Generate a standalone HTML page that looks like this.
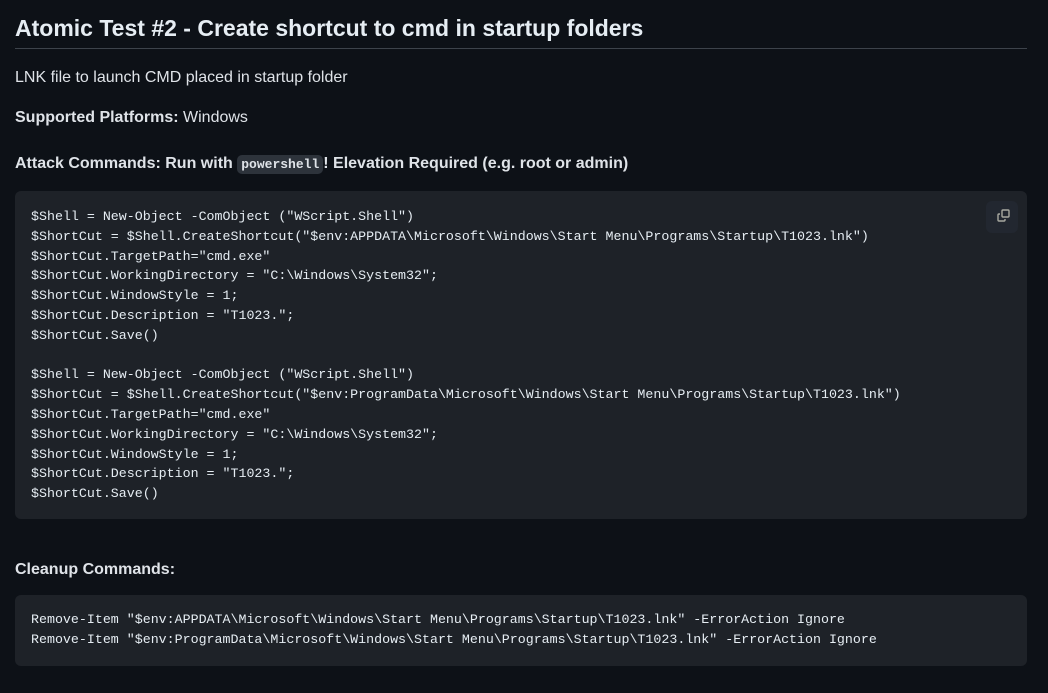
<!DOCTYPE html><html><head><style>
body{margin:0;background:#0d1117;color:#e6edf3;font-family:"Liberation Sans",sans-serif;width:1048px;height:693px;overflow:hidden}
h2{position:absolute;left:15px;right:21px;top:12px;margin:0;font-size:23px;font-weight:600;padding-bottom:4px;border-bottom:1px solid #3d434b;line-height:32px}
p{position:absolute;left:15px;margin:0;font-size:16px;line-height:22px;color:#dfe3e8}
b{font-weight:600}
code.i{font-family:"Liberation Mono",monospace;font-size:13px;background:#2d333b;border-radius:5px;padding:2px 4px;font-weight:700}
pre{position:absolute;left:15px;right:21px;margin:0;background:#1e2228;border-radius:6px;padding:16px;font-family:"Liberation Mono",monospace;font-size:13.3px;line-height:19.8px;color:#e6edf3;box-sizing:border-box}
.cp{position:absolute;right:9px;top:10px;width:32px;height:32px;border-radius:6px;background:#222730}
</style></head><body>
<h2>Atomic Test #2 - Create shortcut to cmd in startup folders</h2>
<p style="top:67px">LNK file to launch CMD placed in startup folder</p>
<p style="top:107px"><b>Supported Platforms:</b> Windows</p>
<p style="top:153px"><b>Attack Commands: Run with <code class="i">powershell</code>! Elevation Required (e.g. root or admin)</b></p>
<pre style="top:191px;height:328px;padding-top:16px">$Shell = New-Object -ComObject ("WScript.Shell")
$ShortCut = $Shell.CreateShortcut("$env:APPDATA\Microsoft\Windows\Start Menu\Programs\Startup\T1023.lnk")
$ShortCut.TargetPath="cmd.exe"
$ShortCut.WorkingDirectory = "C:\Windows\System32";
$ShortCut.WindowStyle = 1;
$ShortCut.Description = "T1023.";
$ShortCut.Save()

$Shell = New-Object -ComObject ("WScript.Shell")
$ShortCut = $Shell.CreateShortcut("$env:ProgramData\Microsoft\Windows\Start Menu\Programs\Startup\T1023.lnk")
$ShortCut.TargetPath="cmd.exe"
$ShortCut.WorkingDirectory = "C:\Windows\System32";
$ShortCut.WindowStyle = 1;
$ShortCut.Description = "T1023.";
$ShortCut.Save()<div class="cp"><svg width="32" height="32" viewBox="0 0 32 32" fill="none" stroke="#a8a8a0" stroke-width="1.4"><rect x="16" y="9" width="7" height="7" rx="1"/><path d="M14 13h-1a1 1 0 0 0-1 1v5a1 1 0 0 0 1 1h5a1 1 0 0 0 1-1v-1"/></svg></div></pre>
<p style="top:559px"><b>Cleanup Commands:</b></p>
<pre style="top:595px;height:71px;padding-top:15px">Remove-Item "$env:APPDATA\Microsoft\Windows\Start Menu\Programs\Startup\T1023.lnk" -ErrorAction Ignore
Remove-Item "$env:ProgramData\Microsoft\Windows\Start Menu\Programs\Startup\T1023.lnk" -ErrorAction Ignore</pre>
</body></html>
